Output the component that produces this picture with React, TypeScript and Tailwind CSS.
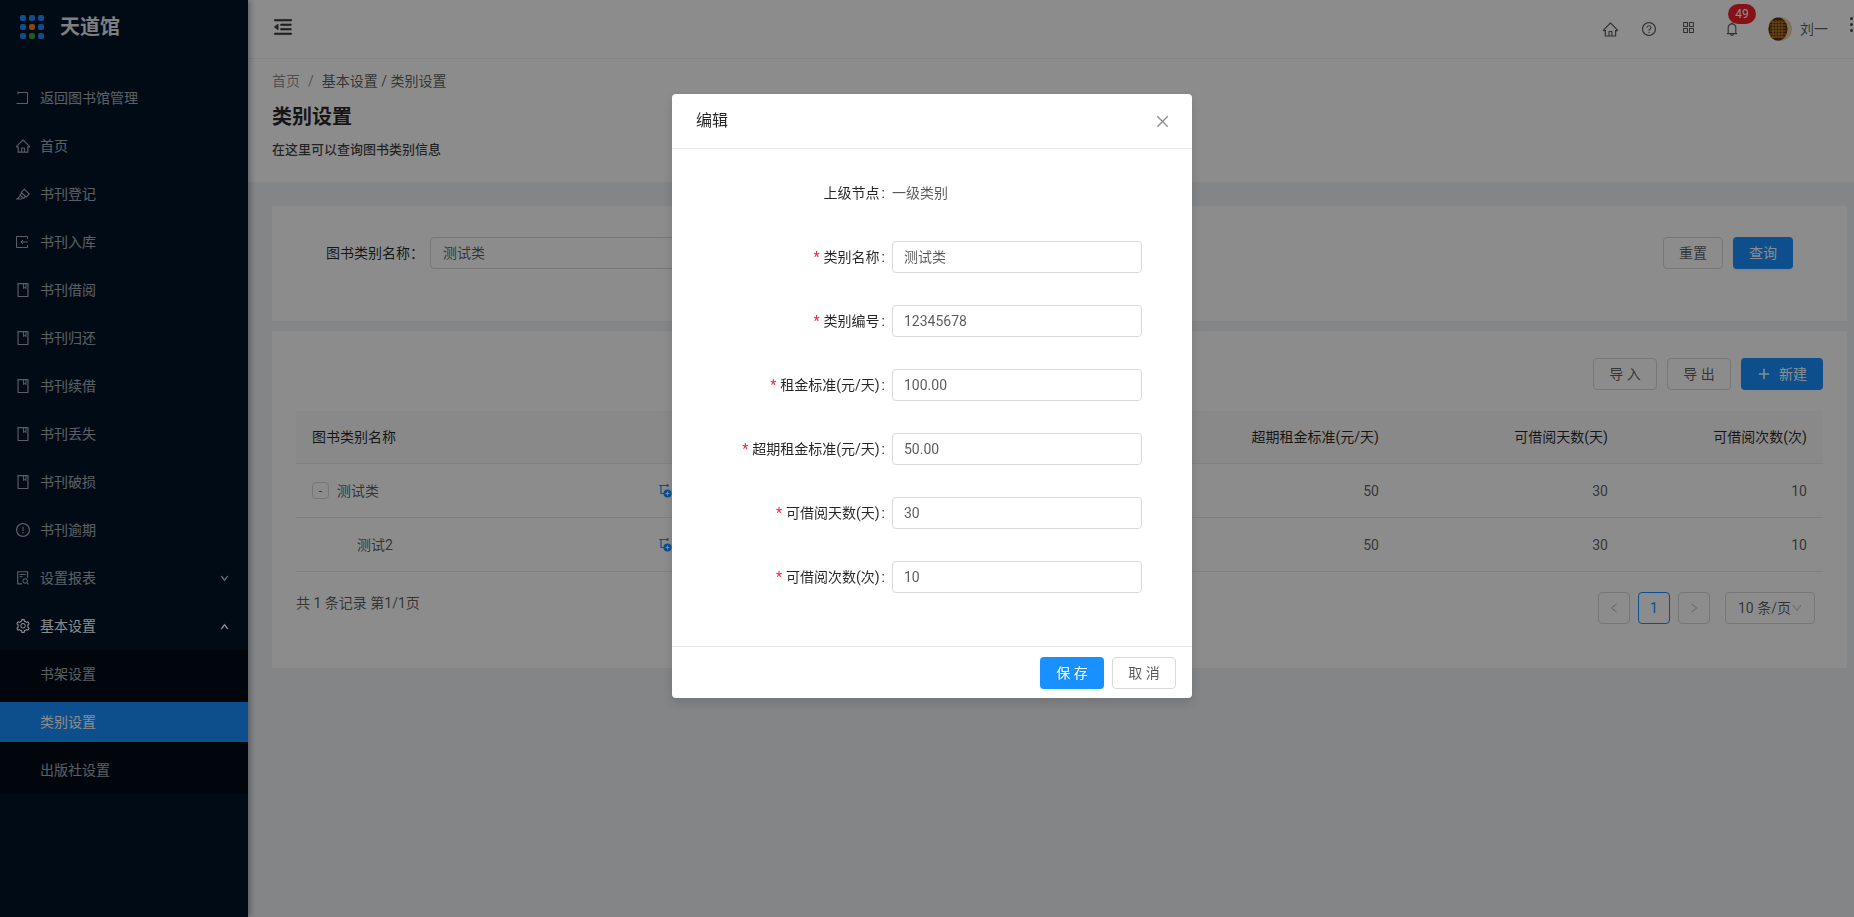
import React from "react";
import {
  AiOutlineHome,
  AiOutlineQuestionCircle,
  AiOutlineAppstore,
  AiOutlineBell,
  AiOutlineExclamationCircle,
  AiOutlineSetting,
  AiOutlineMenuFold,
  AiOutlineClose,
  AiOutlineHighlight,
  AiOutlineBook,
  AiOutlineFileSearch,
  AiOutlineDown,
  AiOutlineUp,
  AiOutlineLeft,
  AiOutlineRight,
  AiOutlinePlus,
} from "react-icons/ai";

function ReturnIcon() {
  return (
    <svg width="14" height="14" viewBox="0 0 14 14" fill="none" stroke="currentColor" strokeWidth="1">
      <path d="M3 1.5H12.5V12.5H1.5" />
      <path d="M3 0.5V3.5" />
    </svg>
  );
}

function ImportIcon() {
  return (
    <svg width="14" height="14" viewBox="0 0 14 14" fill="none" stroke="currentColor" strokeWidth="1">
      <path d="M12.5 4V1.5H1.5V12.5H12.5V10" />
      <path d="M12.5 7H6M8 5L6 7L8 9" />
    </svg>
  );
}

function TreeAddIcon() {
  return (
    <svg width="14" height="14" viewBox="0 0 14 14" fill="none">
      <path d="M1 1.5H9M3 1.5V9.5H6" stroke="#1890ff" strokeWidth="1.2" />
      <circle cx="9.5" cy="1.5" r="1.3" fill="#1890ff" />
      <circle cx="9.5" cy="9.5" r="4" fill="#1890ff" />
      <path d="M7.5 9.5H11.5M9.5 7.5V11.5" stroke="#fff" strokeWidth="1" />
    </svg>
  );
}

function LogoDots() {
  const colors = ["#1890ff", "#1890ff", "#1890ff", "#1890ff", "#fa7d14", "#1890ff", "#1890ff", "#2eaa3c", "#1890ff"];
  return (
    <div className="grid grid-cols-[6px_6px_6px] grid-rows-[6px_6px_6px] gap-[3px]">
      {colors.map((c, i) => (
        <svg key={i} width="6" height="6" viewBox="0 0 6 6">
          <rect width="6" height="6" rx="2" fill={c} />
        </svg>
      ))}
    </div>
  );
}

function Avatar() {
  const lines = [5, 8, 11, 14, 17, 20];
  return (
    <svg width="24" height="24" viewBox="0 0 24 24">
      <circle cx="12" cy="12" r="12" fill="#e6d3a6" />
      <ellipse cx="10" cy="12" rx="9.5" ry="11.5" fill="#5a2c14" />
      {lines.map((v) => (
        <path key={`h${v}`} d={`M2 ${v}H18`} stroke="#d9a520" strokeWidth="0.8" />
      ))}
      {[5, 8, 11, 14].map((v) => (
        <path key={`v${v}`} d={`M${v} 3V21`} stroke="#d9a520" strokeWidth="0.8" />
      ))}
    </svg>
  );
}

const navItems: { label: string; icon: React.ReactNode; chevron?: boolean }[] = [
  { label: "返回图书馆管理", icon: <ReturnIcon /> },
  { label: "首页", icon: <AiOutlineHome size={16} /> },
  { label: "书刊登记", icon: <AiOutlineHighlight size={16} /> },
  { label: "书刊入库", icon: <ImportIcon /> },
  { label: "书刊借阅", icon: <AiOutlineBook size={16} /> },
  { label: "书刊归还", icon: <AiOutlineBook size={16} /> },
  { label: "书刊续借", icon: <AiOutlineBook size={16} /> },
  { label: "书刊丢失", icon: <AiOutlineBook size={16} /> },
  { label: "书刊破损", icon: <AiOutlineBook size={16} /> },
  { label: "书刊逾期", icon: <AiOutlineExclamationCircle size={16} /> },
  { label: "设置报表", icon: <AiOutlineFileSearch size={16} />, chevron: true },
];

function Sidebar() {
  return (
    <aside className="relative z-10 flex w-[248px] shrink-0 flex-col bg-[#001529] shadow-[2px_0_6px_rgba(0,21,41,0.35)]">
      <div className="flex h-[54px] items-center gap-4 pl-5">
        <LogoDots />
        <span className="text-[20px] font-bold leading-none text-white/90">天道馆</span>
      </div>
      <nav className="mt-6 flex flex-col">
        {navItems.map((item) => (
          <div key={item.label} className="mb-2 flex h-10 items-center pl-[15px] pr-[19px] text-sm text-white/65">
            <span className="flex w-[25px] items-center">{item.icon}</span>
            <span className="flex-1">{item.label}</span>
            {item.chevron && <AiOutlineDown size={9} strokeWidth={100} />}
          </div>
        ))}
        <div className="flex h-10 items-center pl-[15px] pr-[19px] text-sm text-white">
          <span className="flex w-[25px] items-center">
            <AiOutlineSetting size={16} />
          </span>
          <span className="flex-1">基本设置</span>
          <AiOutlineUp size={9} strokeWidth={100} />
        </div>
        <div className="mt-1 flex flex-col gap-2 bg-[#000c17] py-1 text-sm text-white/65">
          <div className="flex h-10 items-center pl-10">书架设置</div>
          <div className="flex h-10 items-center bg-[#1890ff] pl-10 text-white">类别设置</div>
          <div className="flex h-10 items-center pl-10">出版社设置</div>
        </div>
      </nav>
    </aside>
  );
}

function TopBar() {
  return (
    <header className="flex h-[59px] shrink-0 items-center border-b border-[#f0f0f0] bg-white pl-6 pr-[1px] text-black/65">
      <AiOutlineMenuFold size={22} strokeWidth={30} stroke="currentColor" className="-translate-y-[2px] text-black/70" />
      <div className="ml-auto flex items-center">
        <AiOutlineHome size={17} />
        <AiOutlineQuestionCircle size={16} className="ml-[22px]" />
        <AiOutlineAppstore size={15} className="ml-[24px] -translate-y-[2px]" />
        <span className="relative ml-[28px] flex">
          <AiOutlineBell size={16} />
          <span className="absolute -top-[17px] left-[4px] flex h-5 w-7 items-center justify-center rounded-full bg-[#f5222d] text-xs text-white">
            49
          </span>
        </span>
        <span className="ml-[28px] flex">
          <Avatar />
        </span>
        <span className="ml-2 text-sm">刘一</span>
        <span className="ml-[22px] flex -translate-y-[5px] flex-col gap-[3px]">
          <span className="h-[3px] w-[3px] rounded-full bg-black/70" />
          <span className="h-[3px] w-[3px] rounded-full bg-black/70" />
          <span className="h-[3px] w-[3px] rounded-full bg-black/70" />
        </span>
      </div>
    </header>
  );
}

function PageHead() {
  return (
    <section className="h-[123px] shrink-0 bg-white pl-6 pt-[12px]">
      <div className="flex h-5 items-center text-sm leading-5 text-black/65">
        <span className="text-black/45">首页</span>
        <span className="mx-[8px] text-black/45">/</span>
        <span>基本设置 / 类别设置</span>
      </div>
      <h1 className="mt-[12px] text-[20px] font-semibold leading-7 text-black/85">类别设置</h1>
      <p className="mt-[9px] text-[13px] font-medium leading-5 text-black/75">在这里可以查询图书类别信息</p>
    </section>
  );
}

function SearchCard() {
  return (
    <section className="flex h-[115px] shrink-0 items-start bg-white pt-[31px]">
      <div className="flex h-8 items-center">
        <label className="ml-[54px] text-sm text-black/85">图书类别名称：</label>
        <div className="ml-[6px] flex h-8 w-[400px] items-center rounded border border-[#d9d9d9] pl-3 text-sm text-black/65">
          测试类
        </div>
      </div>
      <div className="ml-auto mr-[54px] flex gap-[10px]">
        <button className="h-8 w-[60px] rounded border border-[#d9d9d9] bg-white text-sm text-black/65">重置</button>
        <button className="h-8 w-[60px] rounded bg-[#1890ff] text-sm text-white shadow-[0_2px_0_rgba(0,0,0,0.04)]">查询</button>
      </div>
    </section>
  );
}

const tableGrid = "grid grid-cols-[346px_520px_233px_229px_199px] items-center";

function TableCard() {
  return (
    <section className="mt-[10px] h-[337px] shrink-0 bg-white px-6 pt-[27px]">
      <div className="flex justify-end gap-[10px]">
        <button className="h-8 w-[64px] rounded border border-[#d9d9d9] bg-white text-sm text-black/65">导 入</button>
        <button className="h-8 w-[64px] rounded border border-[#d9d9d9] bg-white text-sm text-black/65">导 出</button>
        <button className="flex h-8 w-[82px] items-center justify-center gap-2 rounded bg-[#1890ff] text-sm text-white">
          <AiOutlinePlus size={14} strokeWidth={40} />
          新建
        </button>
      </div>
      <div className={`${tableGrid} mt-[21px] h-[53px] border-b border-[#e8e8e8] bg-[#fafafa] text-sm text-black/85`}>
        <div className="pl-4">图书类别名称</div>
        <div />
        <div className="pr-4 text-right">超期租金标准(元/天)</div>
        <div className="pr-4 text-right">可借阅天数(天)</div>
        <div className="pr-4 text-right">可借阅次数(次)</div>
      </div>
      <TableRows />
      <div className="mt-[20px] flex items-start justify-between">
        <span className="text-sm leading-[22px] text-black/65">共 1 条记录 第1/1页</span>
        <div className="mr-2 flex items-center text-sm text-black/65">
          <span className="flex h-8 w-8 items-center justify-center rounded border border-[#d9d9d9] text-black/25">
            <AiOutlineLeft size={12} />
          </span>
          <span className="ml-2 flex h-8 w-8 items-center justify-center rounded border border-[#1890ff] text-[#1890ff]">1</span>
          <span className="ml-2 flex h-8 w-8 items-center justify-center rounded border border-[#d9d9d9] text-black/25">
            <AiOutlineRight size={12} />
          </span>
          <span className="ml-[15px] flex h-8 w-[90px] items-center rounded border border-[#d9d9d9] pl-3 text-black/65">
            10 条/页
            <AiOutlineDown size={12} className="text-black/25" />
          </span>
        </div>
      </div>
    </section>
  );
}

function TableRows() {
  const cells = (
    <>
      <div className="pr-4 text-right">50</div>
      <div className="pr-4 text-right">30</div>
      <div className="pr-4 text-right">10</div>
    </>
  );
  return (
    <>
      <div className={`${tableGrid} h-[54px] border-b border-[#e8e8e8] text-sm text-black/65`}>
        <div className="flex items-center pl-4">
          <span className="mr-2 flex h-[17px] w-[17px] items-center justify-center rounded-sm border border-[#d9d9d9] text-xs">-</span>
          测试类
        </div>
        <div className="flex pl-4">
          <TreeAddIcon />
        </div>
        {cells}
      </div>
      <div className={`${tableGrid} h-[54px] border-b border-[#e8e8e8] text-sm text-black/65`}>
        <div className="pl-[61px]">测试2</div>
        <div className="flex pl-4">
          <TreeAddIcon />
        </div>
        {cells}
      </div>
    </>
  );
}

const fields = [
  { label: "类别名称", value: "测试类" },
  { label: "类别编号", value: "12345678" },
  { label: "租金标准(元/天)", value: "100.00" },
  { label: "超期租金标准(元/天)", value: "50.00" },
  { label: "可借阅天数(天)", value: "30" },
  { label: "可借阅次数(次)", value: "10" },
];

function Modal() {
  return (
    <div className="fixed inset-0 z-20 bg-black/45 pl-[672px] pt-[94px]">
      <div className="w-[520px] rounded bg-white shadow-[0_4px_12px_rgba(0,0,0,0.15)]">
        <div className="flex h-[55px] items-center justify-between border-b border-[#e8e8e8] pl-6 pr-[21px]">
          <span className="text-base text-black/85">编辑</span>
          <AiOutlineClose size={17} className="text-black/45" />
        </div>
        <div className="flex h-[497px] flex-col gap-8 pt-7">
          <div className="flex h-8 items-center text-sm">
            <span className="w-[213px] text-right text-black/85">
              上级节点<span className="ml-[2px]">:</span>
            </span>
            <span className="ml-[7px] text-black/65">一级类别</span>
          </div>
          {fields.map((f) => (
            <div key={f.label} className="flex h-8 items-center text-sm">
              <span className="w-[213px] text-right text-black/85">
                <span className="mr-1 text-[#f5222d]">*</span>
                {f.label}
                <span className="ml-[2px]">:</span>
              </span>
              <div className="ml-[7px] flex h-8 w-[250px] items-center rounded border border-[#d9d9d9] pl-[11px] text-black/65">
                {f.value}
              </div>
            </div>
          ))}
        </div>
        <div className="flex h-[52px] items-center justify-end gap-2 border-t border-[#e8e8e8] pr-4">
          <button className="h-8 w-16 rounded bg-[#1890ff] text-sm text-white shadow-[0_2px_0_rgba(0,0,0,0.04)]">保 存</button>
          <button className="h-8 w-16 rounded border border-[#d9d9d9] bg-white text-sm text-black/65">取 消</button>
        </div>
      </div>
    </div>
  );
}

export default function App() {
  return (
    <div className="flex h-screen w-screen overflow-hidden bg-[#f0f2f5] font-['Roboto','Noto_Sans_CJK_SC',sans-serif]">
      <Sidebar />
      <main className="flex min-w-0 flex-1 flex-col">
        <TopBar />
        <PageHead />
        <div className="mt-6 flex flex-col pl-6 pr-[7px]">
          <SearchCard />
          <TableCard />
        </div>
      </main>
      <Modal />
    </div>
  );
}
